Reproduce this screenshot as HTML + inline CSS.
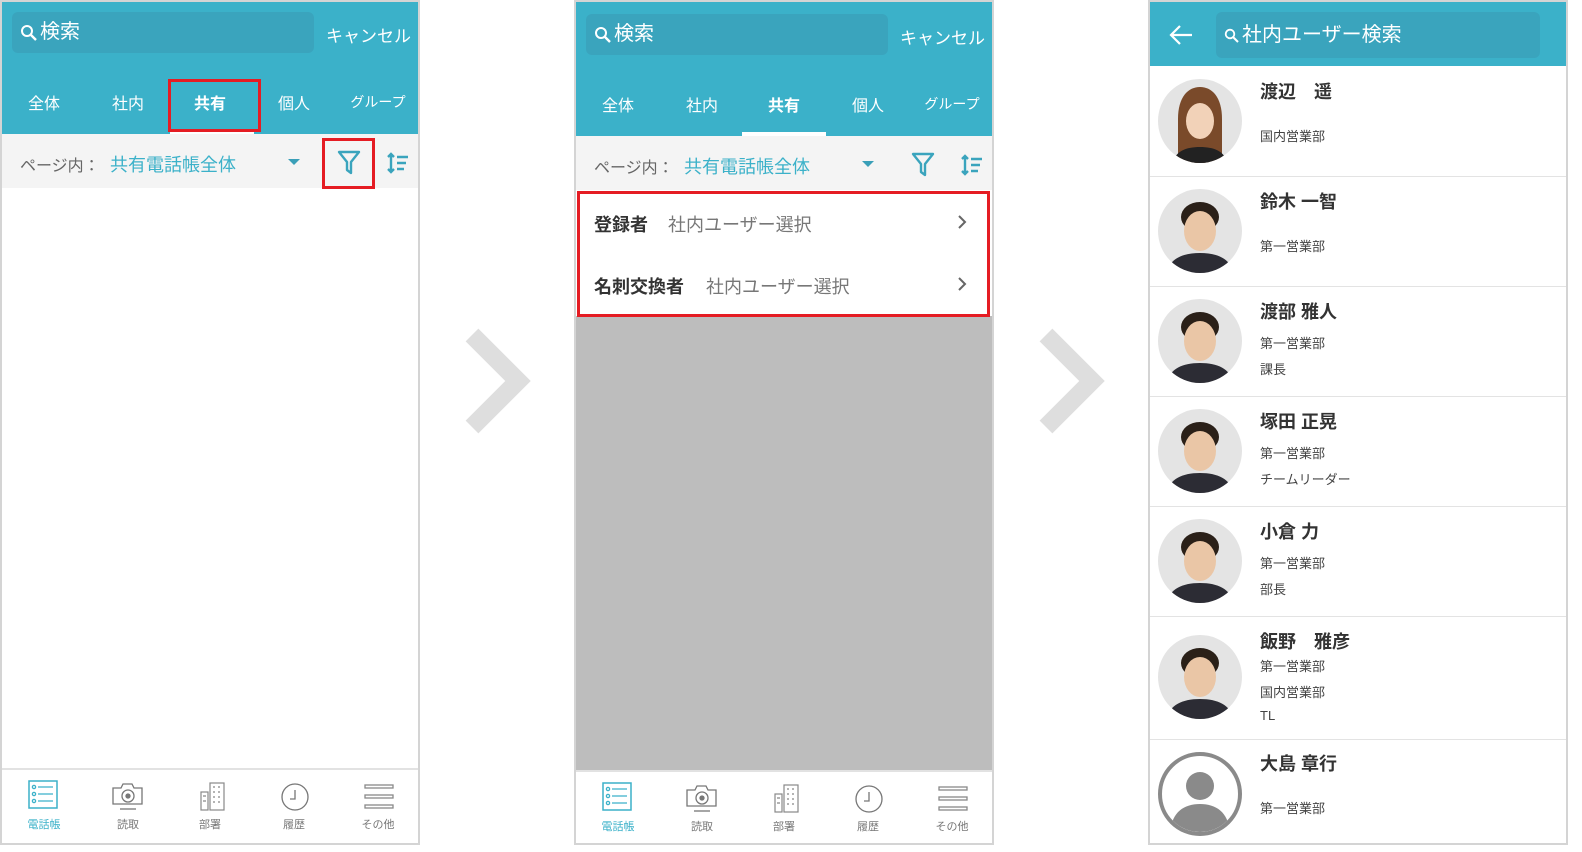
<!DOCTYPE html>
<html><head><meta charset="utf-8"><style>
*{margin:0;padding:0;box-sizing:border-box}
body{width:1582px;height:852px;background:#fff;position:relative;overflow:hidden;font-family:"Liberation Sans","Noto Sans CJK JP",sans-serif}
.p{position:absolute;width:420px;height:845px;border:2px solid #d4d4d4;background:#fff;overflow:hidden}
.a{position:absolute}
.hd{left:0;top:0;width:416px;height:132px;background:#3bb1c9}
.sb{left:10px;top:10px;width:302px;height:41px;background:#3aa4bd;border-radius:6px;color:#fff;font-size:20px;line-height:41px;padding-left:28px}
.cn{left:324px;top:20px;color:#fff;font-size:17px}
.tab{top:88px;color:#fff;font-size:16px;width:84px;text-align:center}
.fb{left:0;top:132px;width:416px;height:54px;background:#f4f4f4}
.nav{left:0;top:766px;width:416px;height:77px;border-top:2px solid #e2e2e2;background:#fff}
.ni{top:50px;font-size:11px;color:#777;width:84px;text-align:center}
.red{border:3px solid #e51c23}
.row{left:0;width:416px;border-bottom:1px solid #e3e3e3}
.nm{left:110px;font-size:18px;color:#333;font-weight:bold}
.sub{left:110px;font-size:13px;color:#444}
.av{left:8px;width:84px;height:84px;border-radius:50%;overflow:hidden;background:#e4e4e4}
</style></head><body>

<!-- Panel 1 -->
<div class="p" style="left:0;top:0">
<div class="a hd"></div>
<div class="a sb">検索</div>
<svg class="a" style="left:18px;top:22px" width="18" height="18" viewBox="0 0 18 18"><circle cx="7" cy="7" r="5" fill="none" stroke="#fff" stroke-width="2"/><path d="M11 11l5 5" stroke="#fff" stroke-width="2.4"/></svg>
<div class="a cn">キャンセル</div>
<div class="a tab" style="left:0">全体</div>
<div class="a tab" style="left:84px">社内</div>
<div class="a tab" style="left:166px;font-weight:bold">共有</div>
<div class="a tab" style="left:250px">個人</div>
<div class="a tab" style="left:334px;font-size:14px;top:90px">グループ</div>
<div class="a" style="left:168px;top:128px;width:84px;height:4px;background:#fff"></div>
<div class="a red" style="left:166px;top:77px;width:93px;height:53px"></div>
<div class="a fb"></div>
<div class="a" style="left:18px;top:150px;font-size:16px;color:#666">ページ内：</div>
<div class="a" style="left:108px;top:149px;font-size:18px;color:#3bb1c9">共有電話帳全体</div>
<div class="a" style="left:286px;top:157px;border:6px solid transparent;border-top:6px solid #3a9fb8;border-bottom:0;width:0;height:0"></div>
<svg class="a" style="left:335px;top:148px" width="24" height="26" viewBox="0 0 24 26"><path d="M2 2h20l-8 10v11l-4-3v-8z" fill="none" stroke="#3aa4bd" stroke-width="2.4" stroke-linejoin="round"/></svg>
<div class="a red" style="left:320px;top:136px;width:53px;height:51px"></div>
<svg class="a" style="left:384px;top:150px" width="24" height="22" viewBox="0 0 24 22"><path d="M5 2v18M2 5l3-3 3 3M2 17l3 3 3-3M11 5h11M11 11h9M11 17h7" stroke="#3aa4bd" stroke-width="2.4" fill="none"/></svg>
<div class="a nav"></div>
<svg class="a" style="left:26px;top:778px" width="30" height="30"><rect x="1" y="1" width="28" height="27" fill="none" stroke="#3bb1c9" stroke-width="1.5"/><g fill="none" stroke="#3bb1c9" stroke-width="1.3"><circle cx="6" cy="7" r="1.6"/><circle cx="6" cy="14" r="1.6"/><circle cx="6" cy="21" r="1.6"/><path d="M10 7h15M10 14h15M10 21h15"/></g></svg>
<svg class="a" style="left:110px;top:780px" width="32" height="30"><g fill="none" stroke="#777" stroke-width="1.3"><path d="M1 6h8l2-4h9l2 4h8v16H1z"/><circle cx="16" cy="14" r="6"/><circle cx="16" cy="14" r="2" fill="#777"/><path d="M8 27h16"/></g></svg>
<svg class="a" style="left:198px;top:780px" width="26" height="30"><g fill="none" stroke="#888" stroke-width="1.2"><rect x="1" y="10" width="7" height="18"/><rect x="10" y="1" width="14" height="27"/><path d="M13 5h2M18 5h2M13 10h2M18 10h2M13 15h2M18 15h2M13 20h2M18 20h2M3 14h3M3 19h3"/></g></svg>
<svg class="a" style="left:278px;top:780px" width="30" height="30"><circle cx="15" cy="15" r="13" fill="none" stroke="#777" stroke-width="1.3"/><path d="M15 8v9h-5" fill="none" stroke="#777" stroke-width="1.3"/></svg>
<svg class="a" style="left:362px;top:782px" width="30" height="26"><g fill="none" stroke="#888" stroke-width="1.3"><rect x="1" y="1" width="28" height="3"/><rect x="1" y="11" width="28" height="3"/><rect x="1" y="21" width="28" height="3"/></g></svg>
<div class="a ni" style="left:0;color:#3bb1c9;top:814px">電話帳</div>
<div class="a ni" style="left:84px;top:814px">読取</div>
<div class="a ni" style="left:166px;top:814px">部署</div>
<div class="a ni" style="left:250px;top:814px">履歴</div>
<div class="a ni" style="left:334px;top:814px">その他</div>
</div>

<!-- Arrows -->
<svg class="a" style="left:460px;top:323px" width="72" height="116"><path d="M12 12l46 46-46 46" fill="none" stroke="#dedede" stroke-width="18"/></svg>
<svg class="a" style="left:1034px;top:323px" width="72" height="116"><path d="M12 12l46 46-46 46" fill="none" stroke="#dedede" stroke-width="18"/></svg>

<!-- Panel 2 -->
<div class="p" style="left:574px;top:0">
<div class="a hd" style="height:134px"></div>
<div class="a sb" style="top:12px">検索</div>
<svg class="a" style="left:18px;top:24px" width="18" height="18" viewBox="0 0 18 18"><circle cx="7" cy="7" r="5" fill="none" stroke="#fff" stroke-width="2"/><path d="M11 11l5 5" stroke="#fff" stroke-width="2.4"/></svg>
<div class="a cn" style="top:22px">キャンセル</div>
<div class="a tab" style="left:0;top:90px">全体</div>
<div class="a tab" style="left:84px;top:90px">社内</div>
<div class="a tab" style="left:166px;top:90px;font-weight:bold">共有</div>
<div class="a tab" style="left:250px;top:90px">個人</div>
<div class="a tab" style="left:334px;font-size:14px;top:92px">グループ</div>
<div class="a" style="left:166px;top:130px;width:84px;height:4px;background:#fff"></div>
<div class="a fb" style="top:134px"></div>
<div class="a" style="left:18px;top:152px;font-size:16px;color:#666">ページ内：</div>
<div class="a" style="left:108px;top:151px;font-size:18px;color:#3bb1c9">共有電話帳全体</div>
<div class="a" style="left:286px;top:159px;border:6px solid transparent;border-top:6px solid #3a9fb8;border-bottom:0;width:0;height:0"></div>
<svg class="a" style="left:335px;top:150px" width="24" height="26" viewBox="0 0 24 26"><path d="M2 2h20l-8 10v11l-4-3v-8z" fill="none" stroke="#3aa4bd" stroke-width="2.4" stroke-linejoin="round"/></svg>
<svg class="a" style="left:384px;top:152px" width="24" height="22" viewBox="0 0 24 22"><path d="M5 2v18M2 5l3-3 3 3M2 17l3 3 3-3M11 5h11M11 11h9M11 17h7" stroke="#3aa4bd" stroke-width="2.4" fill="none"/></svg>
<div class="a" style="left:0;top:314px;width:416px;height:454px;background:#bdbdbd"></div>
<div class="a" style="left:18px;top:209px;font-size:18px;color:#333;font-weight:bold">登録者</div>
<div class="a" style="left:92px;top:209px;font-size:18px;color:#777">社内ユーザー選択</div>
<div class="a" style="left:18px;top:271px;font-size:18px;color:#333;font-weight:bold">名刺交換者</div>
<div class="a" style="left:130px;top:271px;font-size:18px;color:#777">社内ユーザー選択</div>
<svg class="a" style="left:380px;top:212px" width="12" height="16"><path d="M3 2l6 6-6 6" fill="none" stroke="#666" stroke-width="2"/></svg>
<svg class="a" style="left:380px;top:274px" width="12" height="16"><path d="M3 2l6 6-6 6" fill="none" stroke="#666" stroke-width="2"/></svg>
<div class="a red" style="left:1px;top:189px;width:413px;height:126px"></div>
<div class="a nav" style="top:768px"></div>
<svg class="a" style="left:26px;top:780px" width="30" height="30"><rect x="1" y="1" width="28" height="27" fill="none" stroke="#3bb1c9" stroke-width="1.5"/><g fill="none" stroke="#3bb1c9" stroke-width="1.3"><circle cx="6" cy="7" r="1.6"/><circle cx="6" cy="14" r="1.6"/><circle cx="6" cy="21" r="1.6"/><path d="M10 7h15M10 14h15M10 21h15"/></g></svg>
<svg class="a" style="left:110px;top:782px" width="32" height="30"><g fill="none" stroke="#777" stroke-width="1.3"><path d="M1 6h8l2-4h9l2 4h8v16H1z"/><circle cx="16" cy="14" r="6"/><circle cx="16" cy="14" r="2" fill="#777"/><path d="M8 27h16"/></g></svg>
<svg class="a" style="left:198px;top:782px" width="26" height="30"><g fill="none" stroke="#888" stroke-width="1.2"><rect x="1" y="10" width="7" height="18"/><rect x="10" y="1" width="14" height="27"/><path d="M13 5h2M18 5h2M13 10h2M18 10h2M13 15h2M18 15h2M13 20h2M18 20h2M3 14h3M3 19h3"/></g></svg>
<svg class="a" style="left:278px;top:782px" width="30" height="30"><circle cx="15" cy="15" r="13" fill="none" stroke="#777" stroke-width="1.3"/><path d="M15 8v9h-5" fill="none" stroke="#777" stroke-width="1.3"/></svg>
<svg class="a" style="left:362px;top:784px" width="30" height="26"><g fill="none" stroke="#888" stroke-width="1.3"><rect x="1" y="1" width="28" height="3"/><rect x="1" y="11" width="28" height="3"/><rect x="1" y="21" width="28" height="3"/></g></svg>
<div class="a ni" style="left:0;color:#3bb1c9;top:816px">電話帳</div>
<div class="a ni" style="left:84px;top:816px">読取</div>
<div class="a ni" style="left:166px;top:816px">部署</div>
<div class="a ni" style="left:250px;top:816px">履歴</div>
<div class="a ni" style="left:334px;top:816px">その他</div>
</div>

<!-- Panel 3 -->
<div class="p" style="left:1148px;top:0">
<div class="a hd" style="height:64px"></div>
<svg class="a" style="left:18px;top:22px" width="26" height="22"><path d="M24 11H3M12 2l-9 9 9 9" fill="none" stroke="#fff" stroke-width="2.2"/></svg>
<div class="a sb" style="left:66px;top:10px;width:324px;height:46px;line-height:46px;padding-left:26px;font-size:20px">社内ユーザー検索</div>
<svg class="a" style="left:74px;top:26px" width="15" height="15"><circle cx="6" cy="6" r="4.3" fill="none" stroke="#fff" stroke-width="1.8"/><path d="M9 9l5 5" stroke="#fff" stroke-width="2"/></svg>

<div class="a row" style="top:64px;height:111px"></div>
<div class="a av" style="top:77px"><svg width="84" height="84"><path d="M20 84V40c0-22 10-32 22-32s22 10 22 32v44z" fill="#7a4a2a"/><ellipse cx="42" cy="42" rx="14" ry="18" fill="#f2d2b8"/><path d="M14 84c4-12 14-16 28-16s24 4 28 16z" fill="#222"/></svg></div>
<div class="a nm" style="top:76px">渡辺　遥</div>
<div class="a sub" style="top:124px">国内営業部</div>

<div class="a row" style="top:175px;height:110px"></div>
<div class="a av" style="top:187px"><svg width="84" height="84"><ellipse cx="42" cy="28" rx="19" ry="15" fill="#2a2018"/><ellipse cx="42" cy="42" rx="16" ry="20" fill="#eac6a6"/><path d="M8 84c4-14 16-20 34-20s30 6 34 20z" fill="#2c2c34"/></svg></div>
<div class="a nm" style="top:186px">鈴木 一智</div>
<div class="a sub" style="top:234px">第一営業部</div>

<div class="a row" style="top:285px;height:110px"></div>
<div class="a av" style="top:297px"><svg width="84" height="84"><ellipse cx="42" cy="28" rx="19" ry="15" fill="#2a2018"/><ellipse cx="42" cy="42" rx="16" ry="20" fill="#eac6a6"/><path d="M8 84c4-14 16-20 34-20s30 6 34 20z" fill="#2c2c34"/></svg></div>
<div class="a nm" style="top:296px">渡部 雅人</div>
<div class="a sub" style="top:331px">第一営業部</div>
<div class="a sub" style="top:357px">課長</div>

<div class="a row" style="top:395px;height:110px"></div>
<div class="a av" style="top:407px"><svg width="84" height="84"><ellipse cx="42" cy="28" rx="19" ry="15" fill="#2a2018"/><ellipse cx="42" cy="42" rx="16" ry="20" fill="#eac6a6"/><path d="M8 84c4-14 16-20 34-20s30 6 34 20z" fill="#2c2c34"/></svg></div>
<div class="a nm" style="top:406px">塚田 正晃</div>
<div class="a sub" style="top:441px">第一営業部</div>
<div class="a sub" style="top:467px">チームリーダー</div>

<div class="a row" style="top:505px;height:110px"></div>
<div class="a av" style="top:517px"><svg width="84" height="84"><ellipse cx="42" cy="28" rx="19" ry="15" fill="#2a2018"/><ellipse cx="42" cy="42" rx="16" ry="20" fill="#eac6a6"/><path d="M8 84c4-14 16-20 34-20s30 6 34 20z" fill="#2c2c34"/></svg></div>
<div class="a nm" style="top:516px">小倉 力</div>
<div class="a sub" style="top:551px">第一営業部</div>
<div class="a sub" style="top:577px">部長</div>

<div class="a row" style="top:615px;height:123px"></div>
<div class="a av" style="top:633px"><svg width="84" height="84"><ellipse cx="42" cy="28" rx="19" ry="15" fill="#2a2018"/><ellipse cx="42" cy="42" rx="16" ry="20" fill="#eac6a6"/><path d="M8 84c4-14 16-20 34-20s30 6 34 20z" fill="#2c2c34"/></svg></div>
<div class="a nm" style="top:626px">飯野　雅彦</div>
<div class="a sub" style="top:654px">第一営業部</div>
<div class="a sub" style="top:680px">国内営業部</div>
<div class="a sub" style="top:706px">TL</div>

<div class="a av" style="top:750px;background:#fff;border:4px solid #8a8a8a"><svg width="76" height="76"><circle cx="38" cy="30" r="14" fill="#8a8a8a"/><path d="M8 76c2-20 14-28 30-28s28 8 30 28z" fill="#8a8a8a"/></svg></div>
<div class="a nm" style="top:748px">大島 章行</div>
<div class="a sub" style="top:796px">第一営業部</div>
</div>
</body></html>
